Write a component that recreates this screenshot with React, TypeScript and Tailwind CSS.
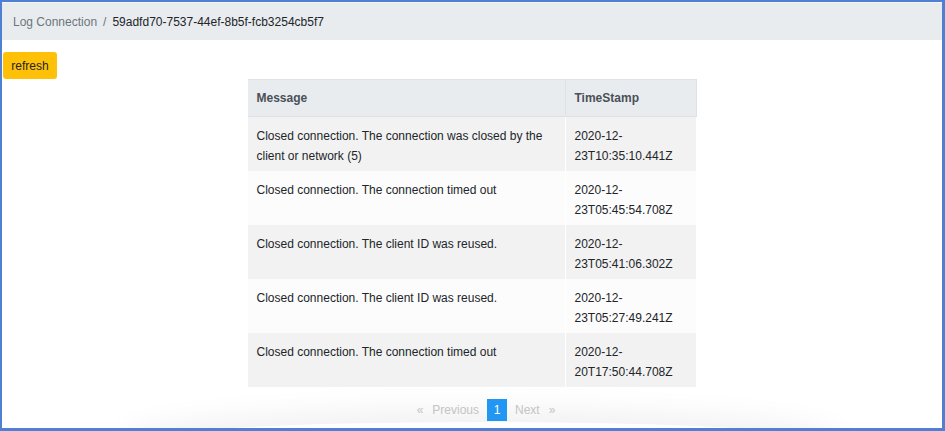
import React from "react";

const rows = [
  { msg: "Closed connection. The connection was closed by the client or network (5)", ts: "2020-12-23T10:35:10.441Z" },
  { msg: "Closed connection. The connection timed out", ts: "2020-12-23T05:45:54.708Z" },
  { msg: "Closed connection. The client ID was reused.", ts: "2020-12-23T05:41:06.302Z" },
  { msg: "Closed connection. The client ID was reused.", ts: "2020-12-23T05:27:49.241Z" },
  { msg: "Closed connection. The connection timed out", ts: "2020-12-20T17:50:44.708Z" },
];

function splitStamp(ts: string) {
  // the browser wrapped these after the second hyphen
  const i = ts.indexOf("-", 5);
  return [ts.slice(0, i + 1), ts.slice(i + 1)];
}

export default function App() {
  return (
    <div
      className="w-[945px] h-[431px] overflow-hidden bg-white border-l-[2px] border-t-[2px] border-r-[3px] border-b-[3px] border-[#5080d4] text-[12px] text-[#212529]"
      style={{ fontFamily: "'Liberation Sans', Arial, sans-serif" }}
    >
      <div className="relative h-full">
        <div className="h-[38px] bg-[#e9ecef] border-t border-[#f4f5f7] flex items-center pl-[11px]">
          <span className="text-[#6c757d]">Log Connection</span>
          <span className="text-[#6c757d] px-[6px]">/</span>
          <span>59adfd70-7537-44ef-8b5f-fcb3254cb5f7</span>
        </div>

        <div className="pt-[12px] pl-[1px]">
          <button className="h-[27px] w-[54px] bg-[#ffc107] rounded-[3px] text-[12px] text-[#212529]">
            refresh
          </button>
        </div>

        <div className="flex justify-center">
          <table className="w-[449px] border-collapse">
            <thead>
              <tr className="h-[37px] bg-[#e9ecef] text-[#495057] font-bold">
                <th className="text-left pl-[9px] border-r border-t border-b border-[#dee2e6]">Message</th>
                <th className="text-left pl-[9px] w-[131px] border-r border-t border-b border-[#dee2e6]">TimeStamp</th>
              </tr>
            </thead>
            <tbody>
              {rows.map((r, i) => {
                const [a, b] = splitStamp(r.ts);
                return (
                  <tr key={i} className={i % 2 === 0 ? "h-[54px] bg-[#f2f2f2]" : "h-[54px] bg-[#fcfcfc]"}>
                    <td className="align-top pt-[9px] pl-[9px] pr-[9px] leading-[20px] border-r border-white">{r.msg}</td>
                    <td className="align-top pt-[9px] pl-[9px] leading-[20px]">
                      {a}
                      <br />
                      {b}
                    </td>
                  </tr>
                );
              })}
            </tbody>
          </table>
        </div>

        <div className="absolute left-[130px] right-[110px] bottom-[-34px] h-[40px] rounded-[50%] shadow-[0_0_30px_12px_rgba(0,0,0,0.06)]" />

        <div className="relative flex justify-center items-center mt-[12px] ml-[28px] text-[#c4c4c4] text-[12px]">
          <span className="pr-[9px]">«</span>
          <span className="pr-[8px]">Previous</span>
          <span className="w-[20px] h-[22px] bg-[#2196f3] text-white flex items-center justify-center">1</span>
          <span className="pl-[8px]">Next</span>
          <span className="pl-[9px]">»</span>
        </div>
      </div>
    </div>
  );
}
